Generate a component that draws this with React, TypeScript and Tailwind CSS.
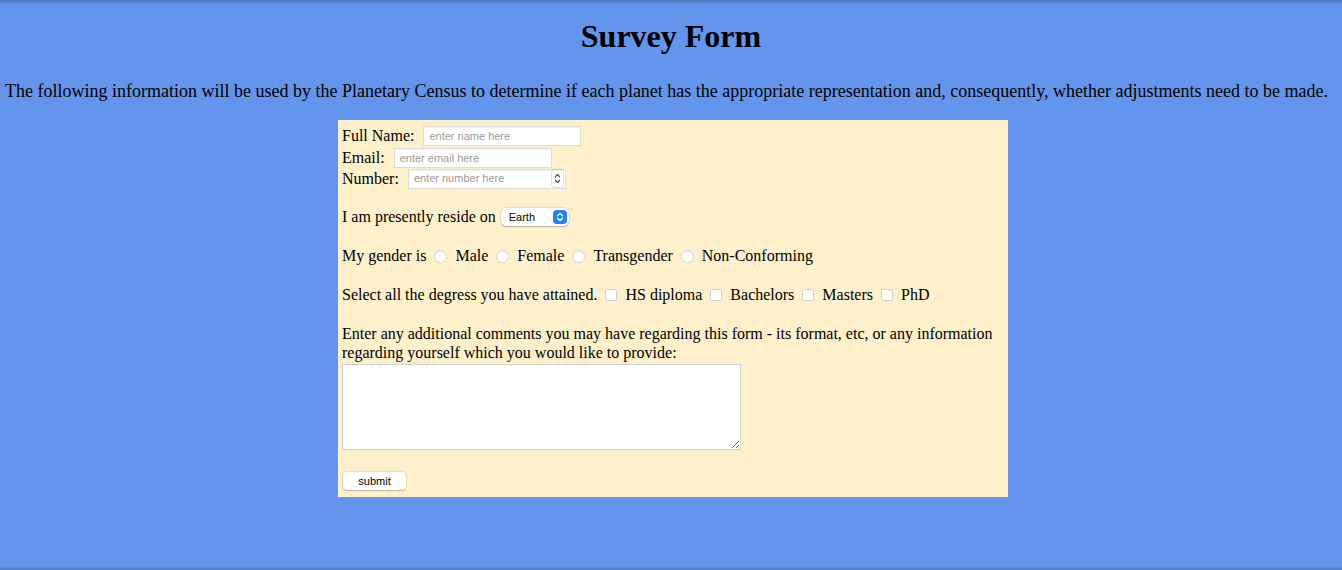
import React from "react";

const serif = "font-['Liberation_Serif','Times_New_Roman',serif]";
const sans = "font-['Liberation_Sans',Arial,sans-serif]";

const TextField = ({ placeholder, className = "" }: { placeholder: string; className?: string }) => (
  <input
    type="text"
    placeholder={placeholder}
    className={`${sans} ${className} w-[158px] h-[20px] bg-white border border-[#dcdcdc] px-[5px] text-[11px] text-black placeholder:text-[#9a9a9a] outline-none shadow-[inset_0_1px_1px_rgba(0,0,0,0.06)]`}
  />
);

const Spinner = ({ blue = false }: { blue?: boolean }) =>
  blue ? (
    <span className="flex items-center justify-center w-[14px] h-[14px] rounded-[4px] bg-[#1f84f8]">
      <svg width="8" height="10" viewBox="0 0 8 10" fill="none" stroke="white" strokeWidth="1.4" strokeLinecap="round" strokeLinejoin="round">
        <path d="M1.5 3.8 L4 1.5 L6.5 3.8" />
        <path d="M1.5 6.2 L4 8.5 L6.5 6.2" />
      </svg>
    </span>
  ) : (
    <span className="flex items-center justify-center w-[11px] h-[17px] rounded-[3px] bg-white shadow-[0_0_0_1px_rgba(0,0,0,0.12)]">
      <svg width="7" height="13" viewBox="0 0 7 13" fill="none" stroke="#444" strokeWidth="1.1" strokeLinecap="round" strokeLinejoin="round">
        <path d="M1.3 4.8 L3.5 2.5 L5.7 4.8" />
        <path d="M1.3 8.2 L3.5 10.5 L5.7 8.2" />
      </svg>
    </span>
  );

const Radio = ({ name }: { name: string }) => (
  <input
    type="radio"
    name={name}
    className="appearance-none w-[13px] h-[13px] rounded-full bg-white border border-[#d4d4d4] shadow-[inset_0_1px_1px_rgba(0,0,0,0.05)]"
  />
);

const Check = () => (
  <input
    type="checkbox"
    className="appearance-none w-[12px] h-[12px] rounded-[2px] bg-white border border-[#d0d0d0]"
  />
);

export default function App() {
  return (
    <div className={`${serif} relative min-h-[570px] bg-[#6495ed] text-black text-[16px] overflow-hidden`}>
      <div className="fixed inset-x-0 top-0 h-[4px] bg-gradient-to-b from-black/25 to-transparent pointer-events-none" />
      <div className="fixed inset-x-0 bottom-0 h-[4px] bg-gradient-to-t from-black/20 to-transparent pointer-events-none" />

      <h1 className="pt-[18px] text-center text-[32px] font-bold leading-[37px]">Survey Form</h1>
      <p className="mt-[26px] pr-[9px] text-center text-[18px] leading-[20px]">
        The following information will be used by the Planetary Census to determine if each planet has the
        appropriate representation and, consequently, whether adjustments need to be made.
      </p>

      <form className="ml-[338px] mt-[19px] w-[670px] bg-[#fff0cc] px-[4px] pt-[5px] pb-[7px]">
        <div className="flex items-center h-[21px]">
          <label>Full Name:</label>
          <TextField placeholder="enter name here" className="ml-[9px]" />
        </div>
        <div className="flex items-center h-[21px] mt-[1px]">
          <label>Email:</label>
          <TextField placeholder="enter email here" className="ml-[9px]" />
        </div>
        <div className="flex items-center h-[21px]">
          <label>Number:</label>
          <div className="ml-[9px] flex items-center w-[158px] h-[20px] bg-white border border-[#dcdcdc] pl-[5px] pr-[2px] shadow-[inset_0_1px_1px_rgba(0,0,0,0.06)]">
            <input
              type="text"
              inputMode="numeric"
              placeholder="enter number here"
              className={`${sans} flex-1 min-w-0 bg-transparent text-[11px] placeholder:text-[#9a9a9a] outline-none`}
            />
            <Spinner />
          </div>
        </div>

        <div className="flex items-center h-[20px] mt-[18px]">
          <label>I am presently reside on</label>
          <div className="ml-[5px] flex items-center justify-between w-[68px] h-[18px] rounded-[5px] bg-white pl-[8px] pr-[2px] shadow-[0_0_0_0.5px_rgba(0,0,0,0.15),0_1px_1px_rgba(0,0,0,0.2)]">
            <select className={`${sans} appearance-none bg-transparent text-[11px] outline-none`}>
              <option>Earth</option>
              <option>Mars</option>
              <option>Venus</option>
            </select>
            <Spinner blue />
          </div>
        </div>

        <div className="flex items-center gap-[8px] h-[20px] mt-[19px]">
          <span>My gender is</span>
          <Radio name="gender" />
          <span>Male</span>
          <Radio name="gender" />
          <span>Female</span>
          <Radio name="gender" />
          <span>Transgender</span>
          <Radio name="gender" />
          <span>Non-Conforming</span>
        </div>

        <div className="flex items-center gap-[8px] h-[20px] mt-[19px]">
          <span>Select all the degress you have attained.</span>
          <Check />
          <span>HS diploma</span>
          <Check />
          <span>Bachelors</span>
          <Check />
          <span>Masters</span>
          <Check />
          <span>PhD</span>
        </div>

        <p className="mt-[19px] leading-[19px]">
          Enter any additional comments you may have regarding this form - its format, etc, or any information
          regarding yourself which you would like to provide:
        </p>
        <textarea className="block mt-[2px] w-[399px] h-[86px] bg-white border border-[#cfcfcf] outline-none" />

        <button
          type="button"
          className={`${sans} block mt-[22px] ml-[1px] w-[63px] h-[18px] rounded-[4px] bg-white text-[11px] shadow-[0_0_0_0.5px_rgba(0,0,0,0.15),0_1px_1px_rgba(0,0,0,0.2)]`}
        >
          submit
        </button>
      </form>
    </div>
  );
}
